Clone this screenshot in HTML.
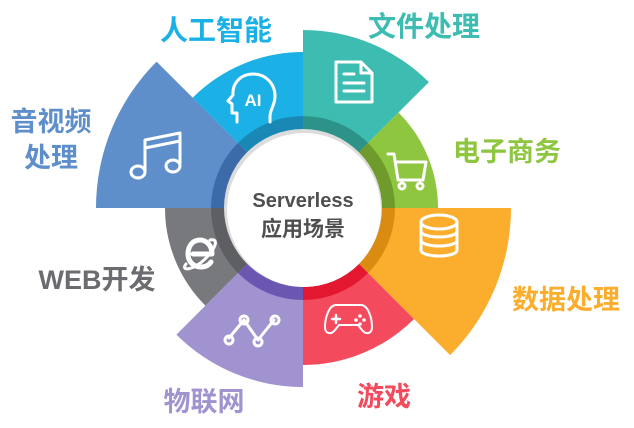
<!DOCTYPE html>
<html><head><meta charset="utf-8"><style>
html,body{margin:0;padding:0;background:#fff;width:634px;height:428px;overflow:hidden}
svg{display:block}
text{font-family:"Liberation Sans","Noto Sans CJK SC",sans-serif;font-weight:bold}
</style></head><body>
<svg width="634" height="428" viewBox="0 0 634 428" xmlns="http://www.w3.org/2000/svg">
<circle cx="300" cy="214" r="104" fill="#dcdcdc"/>
<path d="M303,208 L303,30 A178,178 0 0 1 428.9,82.1 Z" fill="#3dbdb1"/>
<path d="M303,208 L398.5,112.5 A135,135 0 0 1 438,208 Z" fill="#8fc640"/>
<path d="M303,208 L511,208 A208,208 0 0 1 450.1,355.1 Z" fill="#fbad2d"/>
<path d="M303,208 L414,319 A157,157 0 0 1 303,365 Z" fill="#f34a5e"/>
<path d="M303,208 L303,387 A179,179 0 0 1 176.4,334.6 Z" fill="#a193d0"/>
<path d="M303,208 L205.4,305.6 A138,138 0 0 1 165,208 Z" fill="#78797c"/>
<path d="M303,208 L96,208 A207,207 0 0 1 156.6,61.6 Z" fill="#5f8fca"/>
<path d="M303,208 L192.7,97.7 A156,156 0 0 1 303,52 Z" fill="#1bb1e6"/>
<path d="M303,208 L303,116 A92,92 0 0 1 368,143 Z" fill="#2d9389"/>
<path d="M303,208 L368,143 A92,92 0 0 1 395,208 Z" fill="#6f9b2c"/>
<path d="M303,208 L395,208 A92,92 0 0 1 368,273 Z" fill="#d98b12"/>
<path d="M303,208 L368,273 A92,92 0 0 1 303,300 Z" fill="#e3172f"/>
<path d="M303,208 L303,300 A92,92 0 0 1 238,273 Z" fill="#6b56b2"/>
<path d="M303,208 L238,273 A92,92 0 0 1 211,208 Z" fill="#5d5f63"/>
<path d="M303,208 L211,208 A92,92 0 0 1 238,143 Z" fill="#3d6aa8"/>
<path d="M303,208 L238,143 A92,92 0 0 1 303,116 Z" fill="#1a88b5"/>
<circle cx="303" cy="208" r="79" fill="#dcdcdc"/>
<circle cx="304" cy="210" r="77" fill="#fff"/>
<text x="303" y="207" font-size="20" fill="#4f4f4f" text-anchor="middle">Serverless</text>
<text x="303" y="236" font-size="21" fill="#4f4f4f" text-anchor="middle">应用场景</text>
<text x="216" y="40" font-size="28" fill="#1bb1e6" text-anchor="middle">人工智能</text>
<text x="424" y="36" font-size="28" fill="#3dbdb1" text-anchor="middle">文件处理</text>
<text x="51" y="131" font-size="27" fill="#5f8fca" text-anchor="middle">音视频</text>
<text x="51" y="167" font-size="27" fill="#5f8fca" text-anchor="middle">处理</text>
<text x="507" y="161" font-size="27" fill="#8fc640" text-anchor="middle">电子商务</text>
<text x="97" y="289" font-size="27" fill="#6b6c6f" text-anchor="middle">WEB开发</text>
<text x="566" y="309" font-size="27" fill="#fbad2d" text-anchor="middle">数据处理</text>
<text x="204" y="411" font-size="27" fill="#a193d0" text-anchor="middle">物联网</text>
<text x="384" y="406" font-size="27" fill="#f34a5e" text-anchor="middle">游戏</text>
<g fill="none" stroke="#fff" stroke-width="3" stroke-linecap="round" stroke-linejoin="round">
 <path d="M145,170 V140 L180,133 V163 M145,148 L180,141"/>
 <ellipse cx="138" cy="172" rx="7" ry="6"/><ellipse cx="173" cy="166" rx="7" ry="6"/>
 <path d="M237,122 V113 H232 V104 L228,101 L233,95 C232,82 242,74 253,74 C266,74 275,84 275,96 C275,105 270,110 270,116 V122"/>
 <path d="M336,62 H361 L372,73 V102 H336 Z M361,62 V73 H372 M344,74 H354 M344,83 H364 M344,91 H364"/>
 <path d="M388,154 H394 L398,180 H423 L426,162 H396"/>
 <circle cx="402" cy="186" r="3"/><circle cx="420" cy="186" r="3"/>
 <ellipse cx="439" cy="222" rx="18" ry="7"/>
 <path d="M421,222 V250 C421,258 457,258 457,250 V222 M421,231 C421,239 457,239 457,231 M421,240 C421,248 457,248 457,240"/>
 <path d="M336,305 H361 C368,305 372,318 372,327 C372,334 366,335 362,330 L358,325 H339 L335,330 C331,335 325,334 325,327 C325,318 329,305 336,305 Z" stroke-width="2"/>
 <path d="M336,315 V323 M332,319 H340" stroke-width="2.5"/>
 <path d="M229,338 L244,320 L258,340 L274,320"/>
 <circle cx="229" cy="340" r="4"/><circle cx="244" cy="320" r="4"/><circle cx="258" cy="342" r="4"/><circle cx="275" cy="320" r="4"/>
 <path d="M193,254 H212 C212,245 206,240 200,240 C192,240 188,247 188,254 C188,262 194,267 201,267 C206,267 209,265 211,262" stroke-width="5"/>
 <path d="M186,264 C180,272 194,270 205,259 C215,249 220,238 210,240" stroke-width="3"/>
</g>
<text x="253" y="106" font-size="17" fill="#fff" text-anchor="middle">AI</text>
<circle cx="360" cy="316" r="1.8" fill="#fff"/><circle cx="364" cy="320" r="1.8" fill="#fff"/><circle cx="356" cy="320" r="1.8" fill="#fff"/><circle cx="360" cy="324" r="1.8" fill="#fff"/>
</svg>
</body></html>
